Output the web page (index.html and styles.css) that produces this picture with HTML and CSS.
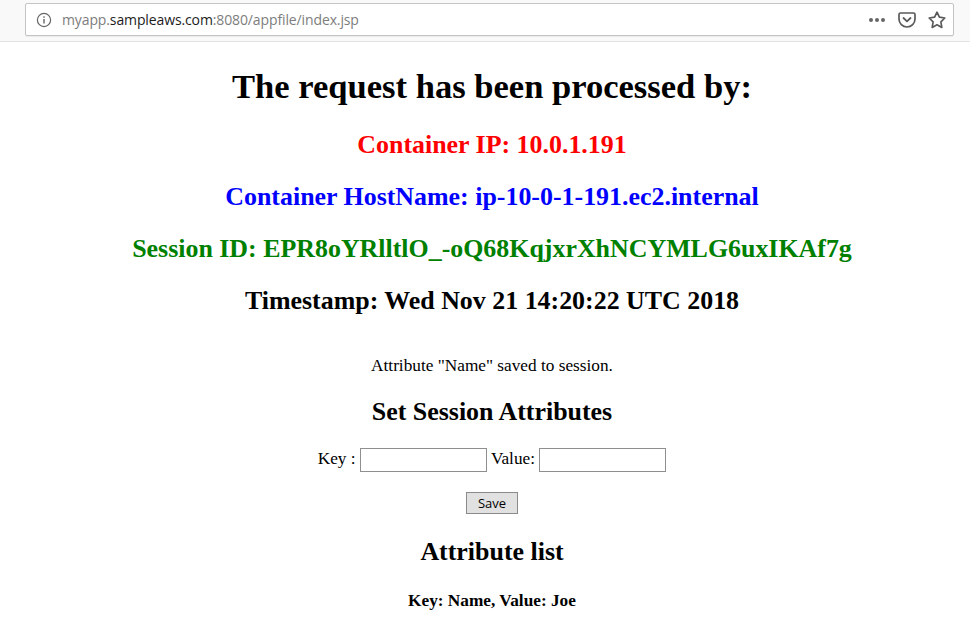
FILE: index.html
```html
<!DOCTYPE html>
<html lang="en">
<head>
<meta charset="utf-8">
<title>Session</title>
<link rel="stylesheet" href="styles.css">
</head>
<body>
<header class="toolbar">
  <div class="urlbar">
    <svg class="info" width="16" height="16" viewBox="0 0 16 16"><circle cx="8" cy="8" r="6.6" fill="none" stroke="#666" stroke-width="1.2"/><rect x="7.3" y="7" width="1.4" height="4.5" fill="#666"/><rect x="7.3" y="4.300" width="1.4" height="1.5" fill="#666"/></svg>
    <div class="url"><span class="dim">myapp.</span>sampleaws.com<span class="dim">:8080/appfile/index.jsp</span></div>
    <div class="actions">
      <svg width="18" height="6" viewBox="0 0 18 6"><circle cx="3" cy="3" r="2" fill="#666"/><circle cx="9" cy="3" r="2" fill="#666"/><circle cx="15" cy="3" r="2" fill="#666"/></svg>
      <svg width="18" height="16" viewBox="0 0 18 16"><path d="M2.5 1h13A1.5 1.5 0 0 1 17 2.5V7a8 8 0 0 1-16 0V2.5A1.5 1.5 0 0 1 2.500 1z" fill="none" stroke="#5a5a5a" stroke-width="1.7"/><path d="M5.500 6 9 9.300 12.500 6" fill="none" stroke="#5a5a5a" stroke-width="1.8" stroke-linecap="round" stroke-linejoin="round"/></svg>
      <svg width="18" height="18" viewBox="0 0 18 18"><path d="M9 1.200 11.400 6.200 16.800 7 12.900 10.800 13.800 16.400 9 13.800 4.200 16.400 5.100 10.800 1.200 7 6.600 6.200z" fill="none" stroke="#5a5a5a" stroke-width="1.7" stroke-linejoin="round"/></svg>
    </div>
  </div>
</header>
<main class="content">
  <h1 class="title">The request has been processed by:</h1>
  <h2 class="info-line red">Container IP: 10.0.1.191</h2>
  <h2 class="info-line blue">Container HostName: ip-10-0-1-191.ec2.internal</h2>
  <h2 class="info-line green">Session ID: EPR8oYRlltlO_-oQ68KqjxrXhNCYMLG6uxIKAf7g</h2>
  <h2 class="info-line">Timestamp: Wed Nov 21 14:20:22 UTC 2018</h2>
  <p class="saved">Attribute "Name" saved to session.</p>
  <h3 class="section">Set Session Attributes</h3>
  <form class="attr-form">
    <div class="fields">Key : <input class="field" type="text"> Value: <input class="field" type="text"></div>
    <div class="submit"><button class="save" type="button">Save</button></div>
  </form>
  <h3 class="section list-title">Attribute list</h3>
  <p class="attr">Key: Name, Value: Joe</p>
</main>
</body>
</html>
```
FILE: styles.css
```css
html, body { margin: 0; padding: 0; height: 100%; overflow: hidden; background: #fff; }
body { font-family: "Liberation Serif", "Times New Roman", serif; color: #000; }
.toolbar { background: #f9f9fa; border-bottom: 1px solid #e3e3e3; padding: 3px 16px 0 25px; box-sizing: border-box; height: 42px; }
.urlbar { height: 33px; box-sizing: border-box; background: #fff; border: 1px solid #c4c4c6; border-radius: 2px; display: flex; align-items: center; padding: 0 7px 0 10px; box-shadow: 0 1px 1px rgba(0,0,0,.06); }
.info { flex: none; }
.url { margin-left: 10px; font: 14px "Open Sans", sans-serif; letter-spacing: -.12px; color: #1c1c1c; flex: 1; }
.dim { color: #7d7d7d; }
.actions { display: flex; align-items: center; gap: 12px; }
.content { padding-left: 14px; text-align: center; }
.title { font-size: 34.56px; line-height: 37px; margin: 26px 0 0; }
.info-line { font-size: 25.92px; line-height: 28px; margin: 24px 0 0; }
.title + .info-line { margin-top: 26px; }
.red { color: #f00; }
.blue { color: #00f; }
.green { color: #008000; }
.saved { font-size: 17.28px; line-height: 18px; margin: 42px 0 0; }
.section { font-size: 25.92px; line-height: 28px; margin: 23px 0 0; }
.attr-form { margin: 0; }
.fields { font-size: 17.28px; margin-top: 21px; line-height: 24px; }
.field { width: 127px; height: 24px; box-sizing: border-box; border: 1px solid #8f8f8f; padding: 1px 2px; margin: 0; vertical-align: baseline; background: #fff; }
.submit { margin-top: 20px; }
.save { width: 52px; height: 22px; box-sizing: border-box; border: 1px solid #8a8a8a; background: #e1e1e1; font: 13px "Open Sans", sans-serif; padding: 0; color: #000; }
.list-title { margin-top: 24px; }
.attr { font-size: 17.28px; font-weight: bold; line-height: 18px; margin: 26px 0 0; }
```
